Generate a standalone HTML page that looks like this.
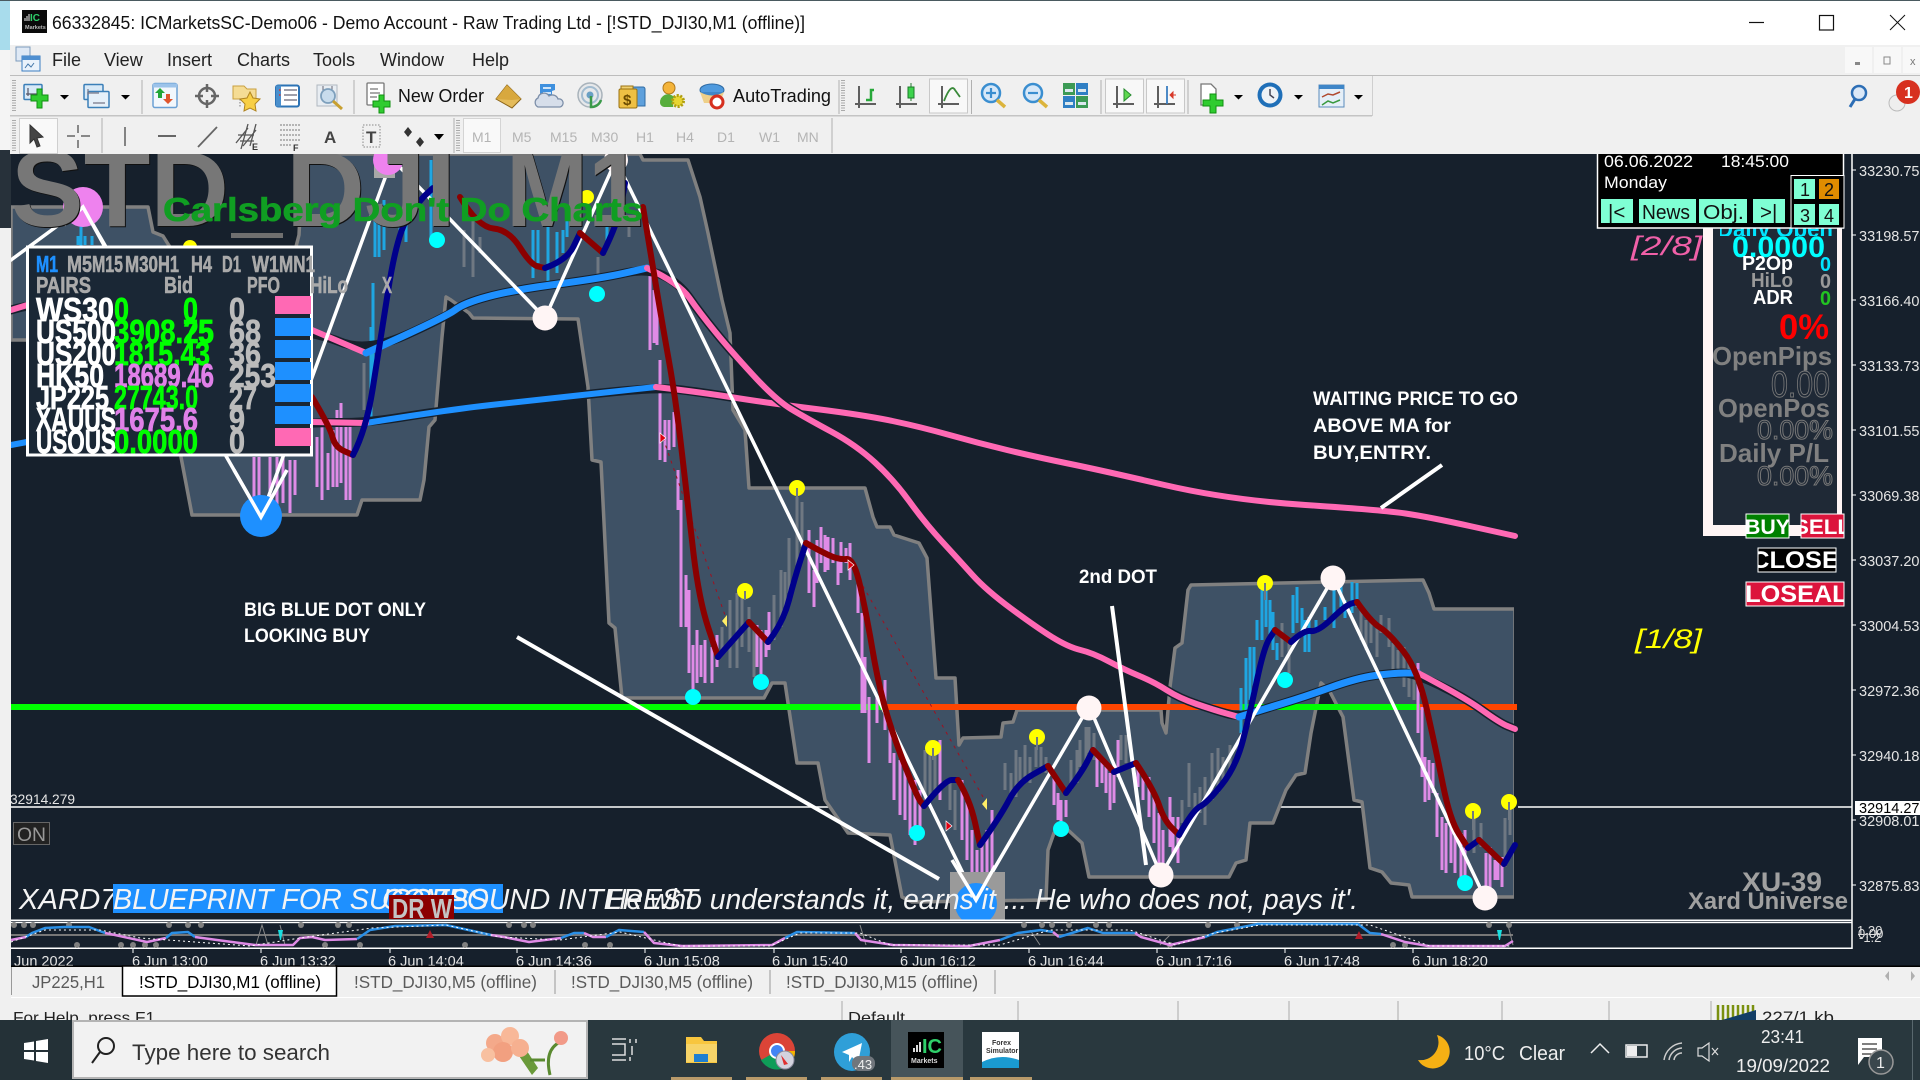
<!DOCTYPE html>
<html lang="en"><head><meta charset="utf-8"><title>MT4</title>
<style>
html,body{margin:0;padding:0;background:#16202c;width:1920px;height:1080px;overflow:hidden}
svg{display:block}
text{font-family:"Liberation Sans",sans-serif;white-space:pre}
.b{font-weight:bold}
.i{font-style:italic}
.ma{fill:none;stroke-linejoin:round;stroke-linecap:round}
.ax{font-size:14.5px;fill:#e4e4e4}
.mn{font-size:18px;fill:#222}
.tf{font-size:14px;fill:#b4b4b4}
.gp{font-weight:bold;font-size:23px;fill:#aaa;stroke:#aaa;stroke-width:.6}
.rw{font-weight:bold;font-size:33px;fill:#fff;stroke:#fff;stroke-width:.7}
.gr{font-weight:bold;font-size:33px;fill:#00ff00;stroke:#00ff00;stroke-width:.7}
.pk{font-weight:bold;font-size:33px;fill:#e080e8;stroke:#e080e8;stroke-width:.7}
.gy{font-weight:bold;font-size:33px;fill:#bbb;stroke:#bbb;stroke-width:.7}
.an{font-weight:bold;font-size:19px;fill:#fff}
.dg{font-size:30px;fill:none;stroke:#777;stroke-width:1}
.og{font-weight:bold;font-size:26px;fill:#808080}
.ti{font-size:14.5px;fill:#e4e4e4}
.tb{font-size:17.5px;fill:#5a5a5a}
.st{font-weight:bold;font-size:108px}
</style></head><body>
<svg xmlns="http://www.w3.org/2000/svg" width="1920" height="1080" viewBox="0 0 1920 1080">
<defs><clipPath id="c1"><rect x="940" y="860" width="80" height="60"/></clipPath>
<clipPath id="c2"><rect x="1720" y="150" width="120" height="86"/></clipPath></defs>
<!-- chart background -->
<rect width="1920" height="1080" fill="#16202c"/>
<line x1="11" y1="807" x2="1852" y2="807" stroke="#fff" stroke-width="1.5"/>
<!-- bands -->
<polygon points="11,207 148,207 153,232 163,236 168,244 185,270 290,270 299,235 303,154 640,154 643,160 688,160 700,197 708,233 722,300 730,333 733,410 745,430 749,488 865,488 873,517 877,527 890,527 894,535 919,543 927,558 936,678 955,678 959,745 963,738 1001,737 1003,723 1013,722 1017,710 1161,710 1162,723 1166,733 1170,687 1175,648 1182,643 1188,590 1191,585 1423,580 1429,593 1434,609 1515,609 1515,897 1412,897 1409,885 1391,883 1382,872 1370,868 1362,802 1354,800 1343,717 1329,690 1321,683 1311,733 1305,773 1296,775 1286,790 1273,823 1250,823 1246,860 1236,863 1229,877 1089,877 1082,843 1068,830 1054,833 1048,850 1046,900 912,902 902,897 890,835 848,833 825,800 818,763 797,763 785,683 772,683 764,698 622,698 615,628 609,623 601,462 592,460 588,387 578,319 473,318 469,313 451,300 446,297 442,337 435,420 429,427 424,480 420,500 362,500 357,515 192,515 181,457 178,400 27,340 11,340" fill="#3e5165" stroke="#808080" stroke-width="3.5" stroke-linejoin="round"/>
<rect x="1514" y="600" width="4" height="300" fill="#16202c"/>
<!-- horizontal level -->
<rect x="11" y="704" width="875" height="6" fill="#00ff00"/>
<rect x="886" y="704" width="356" height="6" fill="#ff4500"/>
<rect x="1242" y="704" width="178" height="6" fill="#00ff00"/>
<rect x="1420" y="704" width="97" height="6" fill="#ff4500"/>
<!-- gray candles -->
<path fill="none" stroke="#6f7882" stroke-width="3" d="M722 627V653M730 600V668M737 593V668M742 593V647M749 607V652M754 627V677M774 595V640M781 570V627M785 572V617M789 538V593M797 497V567M802 502V547M925 750V800M930 740V800M935 755V790M950 780V810M955 790V830M1005 763V790M1011 773V800M1016 750V797M1020 757V787M1025 745V783M1030 757V783M1036 747V767M1041 747V767M1046 757V773M1071 760V790M1077 750V783M1080 740V767M1086 727V767M1089 727V753M1094 733V760M1121 735V760M1126 735V763M1182 800V823M1189 763V807M1195 793V817M1200 787V813M1205 777V825M1212 753V800M1218 748V793M1223 757V783M1230 745V773M1238 740V757M1282 623V657M1289 643V673M1361 610V640M1366 620V650M1371 617V643M1377 625V657M1381 615V633M1389 618V647M1393 643V677M1398 650V677M1404 647V687M1409 663V697M1414 667V700M1474 813V853M1481 823V847M1505 818V867M1510 808V835M364 363V410M464 230V267M473 217V277M480 237V253M598 257V277M629 227V237M415 160V210M445 170V220"/>
<!-- pink candles -->
<path fill="none" stroke="#df8be6" stroke-width="3" d="M657 300V345M650 267V350M654 290V343M660 360V460M665 420V462M669 420V450M674 412V447M678 470V510M681 500V627M686 575V627M689 590V673M693 645V690M697 630V683M701 645V677M705 640V683M712 647V683M717 635V667M757 625V667M761 630V677M766 630V657M769 612V650M809 530V593M814 570V607M817 540V583M821 527V563M825 535V572M828 537V570M833 538V563M838 557V585M841 542V573M846 548V563M850 543V580M858 577V613M862 613V713M865 657V713M869 697V763M877 697V723M885 680V730M890 730V763M894 753V800M900 760V815M905 770V820M910 775V835M915 780V845M920 790V830M940 740V800M962 780V840M967 800V860M972 830V895M977 850V905M982 840V900M987 830V890M992 810V870M1054 777V805M1058 793V820M1061 800V830M1066 800V817M1097 757V787M1102 760V783M1106 763V793M1110 773V810M1114 773V803M1118 740V777M1138 767V787M1143 777V800M1149 777V817M1154 797V843M1159 813V867M1163 830V870M1170 797V847M1173 817V853M1178 817V863M1418 663V733M1422 707V777M1425 757V802M1429 760V800M1433 763V793M1437 793V837M1442 817V870M1446 823V873M1451 827V863M1455 830V873M1461 833V877M1465 830V880M1486 853V897M1490 847V897M1495 860V880M1498 857V880M1502 857V887M254 457V503M259 457V498M270 457V503M277 457V513M283 457V503M290 460V513M295 460V495M317 437V487M322 427V500M328 453V490M333 430V487M337 410V487M341 403V483M346 427V500M350 420V500"/>
<!-- cyan candles -->
<path fill="none" stroke="#1fa6e2" stroke-width="3" d="M1241 688V733M1246 658V717M1250 647V700M1254 647V687M1257 620V640M1262 590V640M1266 585V627M1270 600V637M1273 612V650M1277 643V660M1293 595V633M1297 587V623M1302 608V633M1305 620V652M1309 617V652M1316 620V633M1325 607V620M1334 590V628M1341 583V607M1345 600V618M1352 582V613M1357 583V607M81 207V247M78 236V245M85 236V245M92 236V245M371 327V423M373 283V383M375 200V257M379 207V257M384 200V250M400 223V237M406 225V242M431 160V237M533 230V278M538 230V263M548 227V283M557 232V273M563 230V253M567 217V237M607 227V243M618 180V200"/>
<!-- thin red dashes -->
<path fill="none" stroke="#a01020" stroke-width="1" stroke-dasharray="3 5" d="M663 438L727 621M851 565L987 804"/>
<!-- slow MA -->
<polyline class="ma s" stroke="#16202c" stroke-width="9" points="11,445 27,442 312,422 366,423 446,410 536,400 656,387 699,392 768,403 864,415 921,427 978,443 1036,457 1100,470 1229,500 1382,510 1429,517 1515,536"/>
<polyline class="ma" stroke="#1e90ff" stroke-width="6" points="11,445 27,442"/>
<polyline class="ma s" stroke="#1e90ff" stroke-width="6" points="366,423 446,410 536,400 656,387"/>
<polyline class="ma" stroke="#ff69b4" stroke-width="6" points="312,422 366,423"/>
<polyline class="ma s" stroke="#ff69b4" stroke-width="6" points="656,387 699,392 768,403 864,415 921,427 978,443 1036,457 1100,470 1229,500 1382,510 1429,517 1515,536"/>
<!-- second MA -->
<polyline class="ma s" stroke="#16202c" stroke-width="9" points="11,310 60,295 312,330 366,353 446,317 464,303 513,290 603,278 647,268 679,283 700,313 730,350 776,400 806,418 856,445 894,480 925,523 959,560 986,590 1036,627 1068,647 1093,653 1125,670 1154,682 1179,698 1214,710 1239,717 1261,710 1304,697 1357,678 1393,673 1414,673 1464,697 1500,723 1515,729"/>
<polyline class="ma" stroke="#ff69b4" stroke-width="6" points="11,310 60,295 312,330 366,353"/>
<polyline class="ma s" stroke="#1e90ff" stroke-width="7" points="366,353 446,317 464,303 513,290 603,278 647,268"/>
<polyline class="ma s" stroke="#ff69b4" stroke-width="6" points="647,268 679,283 700,313 730,350 776,400 806,418 856,445 894,480 925,523 959,560 986,590 1036,627 1068,647 1093,653 1125,670 1154,682 1179,698 1214,710 1239,717"/>
<polyline class="ma s" stroke="#1e90ff" stroke-width="7" points="1239,717 1261,710 1304,697 1357,678 1393,673 1418,673"/>
<polyline class="ma s" stroke="#ff69b4" stroke-width="6" points="1418,673 1464,697 1500,723 1515,729"/>
<!-- zigzag -->
<polyline class="ma" stroke="#fff" stroke-width="3.5" points="11,260 83,207 261,517 392,159 545,318 616,160 976,900 1089,706 1161,875 1333,578 1485,898"/>
<!-- drawn lines -->
<path fill="none" stroke="#fff" stroke-width="4" d="M517 637L939 879M1112 606L1146 865M1442 465L1381 508"/>
<!-- HMA -->
<g stroke-width="6">
<polyline class="ma s" stroke="#8b0000" points="312,397 330,427 335,447 353,455"/>
<polyline class="ma s" stroke="#00008b" points="353,455 366,430 379,350 397,233 420,200 433,188"/>
<polyline class="ma s" stroke="#8b0000" points="460,197 478,227 509,230 531,265 545,268"/>
<polyline class="ma s" stroke="#00008b" points="545,268 567,260 580,233"/>
<polyline class="ma" stroke="#8b0000" points="580,233 603,253"/>
<polyline class="ma s" stroke="#00008b" points="603,253 618,223 625,183"/>
<polyline class="ma s" stroke="#8b0000" points="643,207 661,317 676,400 688,507 699,600 718,657"/>
<polyline class="ma s" stroke="#00008b" points="718,657 733,640 749,622"/>
<polyline class="ma" stroke="#8b0000" points="749,622 768,642"/>
<polyline class="ma s" stroke="#00008b" points="768,642 783,623 795,577 806,543"/>
<polyline class="ma s" stroke="#8b0000" points="806,543 818,550 839,560 854,558 867,617 877,677 890,727 917,797 924,806"/>
<polyline class="ma s" stroke="#00008b" points="924,806 945,780 958,780"/>
<polyline class="ma s" stroke="#8b0000" points="958,780 970,800 980,845"/>
<polyline class="ma s" stroke="#00008b" points="980,845 1000,817 1018,783 1048,766"/>
<polyline class="ma" stroke="#8b0000" points="1048,766 1066,793"/>
<polyline class="ma s" stroke="#00008b" points="1066,793 1082,772 1093,750"/>
<polyline class="ma" stroke="#8b0000" points="1093,750 1114,772"/>
<polyline class="ma" stroke="#00008b" points="1114,772 1136,763"/>
<polyline class="ma s" stroke="#8b0000" points="1136,763 1154,790 1164,820 1179,835"/>
<polyline class="ma s" stroke="#00008b" points="1179,835 1193,810 1207,803 1236,767 1250,713 1264,647 1275,630"/>
<polyline class="ma" stroke="#8b0000" points="1275,630 1291,642"/>
<polyline class="ma s" stroke="#00008b" points="1291,642 1304,630 1318,632 1346,605 1357,602"/>
<polyline class="ma s" stroke="#8b0000" points="1357,602 1371,622 1389,633 1418,670 1436,750 1450,820 1468,848"/>
<polyline class="ma" stroke="#00008b" points="1468,848 1479,840"/>
<polyline class="ma" stroke="#8b0000" points="1479,840 1504,864"/>
<polyline class="ma" stroke="#00008b" points="1504,864 1515,845"/>
</g>
<!-- dots -->
<rect x="374" y="155" width="21" height="23" fill="#a8a8a8"/>
<circle cx="388" cy="160" r="15" fill="#ee82ee"/>
<circle cx="83" cy="207" r="20" fill="#ee82ee"/>
<path d="M64 225L83 207L105 247" fill="none" stroke="#fff" stroke-width="3.5"/>
<circle cx="261" cy="516" r="21" fill="#1e90ff"/>
<path d="M234 470L261 517L287 470" fill="none" stroke="#fff" stroke-width="3.5"/>
<rect x="950" y="872" width="55" height="48" fill="#9a9a9a"/>
<circle cx="976" cy="904" r="21" fill="#1e90ff" clip-path="url(#c1)"/>
<path d="M952 860L976 900L995 866" fill="none" stroke="#fff" stroke-width="3.5"/>
<g fill="#fff5f5"><circle cx="545" cy="318" r="12.5"/><circle cx="616" cy="160" r="12"/><circle cx="1089" cy="708" r="12.5"/><circle cx="1161" cy="875" r="12.5"/><circle cx="1333" cy="578" r="12.5"/><circle cx="1485" cy="898" r="12.5"/></g>
<g fill="#00ffff"><circle cx="437" cy="240" r="8"/><circle cx="597" cy="294" r="8"/><circle cx="693" cy="697" r="8"/><circle cx="761" cy="682" r="8"/><circle cx="917" cy="833" r="8"/><circle cx="1061" cy="829" r="8"/><circle cx="1285" cy="680" r="8"/><circle cx="1465" cy="883" r="8"/></g>
<g fill="#ffff00"><circle cx="190" cy="247" r="7"/><circle cx="587" cy="197" r="7"/><circle cx="797" cy="488" r="8"/><circle cx="745" cy="591" r="8"/><circle cx="933" cy="748" r="8"/><circle cx="1037" cy="737" r="8"/><circle cx="1265" cy="583" r="8"/><circle cx="1473" cy="811" r="8"/><circle cx="1509" cy="802" r="8"/></g>
<path d="M797 488V505M745 591V600M933 748V760M1037 737V750M1473 811V830M1509 802V820M1265 583V600" stroke="#6f7882" stroke-width="2"/>
<path d="M727 615L722 621L727 627ZM987 798L982 804L987 810Z" fill="#ffee66"/>
<g fill="#e00010" stroke="#fff" stroke-width=".7"><path d="M660 433L666 438L660 443ZM848 560L854 565L848 570ZM946 821L952 826L946 831Z"/></g>
<!-- STD watermark -->
<g fill="#111">
<text x="12" y="227" class="st" textLength="218" lengthAdjust="spacingAndGlyphs">STD</text>
<text x="287" y="227" class="st" textLength="170" lengthAdjust="spacingAndGlyphs">DJI</text>
<text x="507" y="227" class="st" textLength="137" lengthAdjust="spacingAndGlyphs">M1</text>
</g>
<g fill="#777">
<text x="11" y="226" class="st" textLength="218" lengthAdjust="spacingAndGlyphs">STD</text>
<text x="286" y="226" class="st" textLength="170" lengthAdjust="spacingAndGlyphs">DJI</text>
<text x="506" y="226" class="st" textLength="137" lengthAdjust="spacingAndGlyphs">M1</text>
</g>
<rect x="231" y="233" width="52" height="5" fill="#6f6f6f"/>
<text x="163" y="221" class="b" font-size="33" fill="#109e22" stroke="#109e22" stroke-width=".6" textLength="480" lengthAdjust="spacingAndGlyphs">Carlsberg Don't Do Charts</text>
<!-- left panel -->
<rect x="27.5" y="247" width="284" height="208" fill="#1a2735" stroke="#fff" stroke-width="3"/>
<text x="36" y="272" class="gp" style="fill:#1e90ff;stroke:#1e90ff" textLength="22" lengthAdjust="spacingAndGlyphs">M1</text>
<text x="67" y="272" class="gp" textLength="25" lengthAdjust="spacingAndGlyphs">M5</text>
<text x="92" y="272" class="gp" textLength="31" lengthAdjust="spacingAndGlyphs">M15</text>
<text x="125" y="272" class="gp" textLength="33" lengthAdjust="spacingAndGlyphs">M30</text>
<text x="158" y="272" class="gp" textLength="21" lengthAdjust="spacingAndGlyphs">H1</text>
<text x="191" y="272" class="gp" textLength="21" lengthAdjust="spacingAndGlyphs">H4</text>
<text x="222" y="272" class="gp" textLength="19" lengthAdjust="spacingAndGlyphs">D1</text>
<text x="252" y="272" class="gp" textLength="27" lengthAdjust="spacingAndGlyphs">W1</text>
<text x="279" y="272" class="gp" textLength="36" lengthAdjust="spacingAndGlyphs">MN1</text>
<text x="36" y="293" class="gp" textLength="55" lengthAdjust="spacingAndGlyphs">PAIRS</text>
<text x="164" y="293" class="gp" textLength="29" lengthAdjust="spacingAndGlyphs">Bid</text>
<text x="247" y="293" class="gp" textLength="33" lengthAdjust="spacingAndGlyphs">PFO</text>
<text x="310" y="293" class="gp" textLength="38" lengthAdjust="spacingAndGlyphs">HiLo</text>
<text x="382" y="293" class="gp" textLength="10" lengthAdjust="spacingAndGlyphs">X</text>
<g>
<text x="36" y="321" class="rw" textLength="78" lengthAdjust="spacingAndGlyphs">WS30</text>
<text x="36" y="343" class="rw" textLength="80" lengthAdjust="spacingAndGlyphs">US500</text>
<text x="36" y="365" class="rw" textLength="80" lengthAdjust="spacingAndGlyphs">US200</text>
<text x="36" y="387" class="rw" textLength="68" lengthAdjust="spacingAndGlyphs">HK50</text>
<text x="36" y="409" class="rw" textLength="73" lengthAdjust="spacingAndGlyphs">JP225</text>
<text x="36" y="431" class="rw" textLength="80" lengthAdjust="spacingAndGlyphs">XAUUS</text>
<text x="36" y="453" class="rw" textLength="80" lengthAdjust="spacingAndGlyphs">USOUS</text>
<text x="114" y="321" class="gr" textLength="15" lengthAdjust="spacingAndGlyphs">0</text>
<text x="183" y="321" class="gr" textLength="15" lengthAdjust="spacingAndGlyphs">0</text>
<text x="114" y="343" class="gr" textLength="100" lengthAdjust="spacingAndGlyphs">3908.25</text>
<text x="183" y="343" class="gr" textLength="30" lengthAdjust="spacingAndGlyphs">75</text>
<text x="114" y="365" class="gr" textLength="96" lengthAdjust="spacingAndGlyphs">1815.43</text>
<text x="114" y="387" class="pk" textLength="100" lengthAdjust="spacingAndGlyphs">18689.46</text>
<text x="114" y="409" class="gr" textLength="84" lengthAdjust="spacingAndGlyphs">27743.0</text>
<text x="114" y="431" class="pk" textLength="84" lengthAdjust="spacingAndGlyphs">1675.6</text>
<text x="114" y="453" class="gr" textLength="84" lengthAdjust="spacingAndGlyphs">0.0000</text>
<text x="229" y="321" class="gy" textLength="16" lengthAdjust="spacingAndGlyphs">0</text>
<text x="229" y="343" class="gy" textLength="32" lengthAdjust="spacingAndGlyphs">68</text>
<text x="229" y="365" class="gy" textLength="32" lengthAdjust="spacingAndGlyphs">36</text>
<text x="229" y="387" class="gy" textLength="47" lengthAdjust="spacingAndGlyphs">253</text>
<text x="229" y="409" class="gy" textLength="28" lengthAdjust="spacingAndGlyphs">27</text>
<text x="229" y="431" class="gy" textLength="16" lengthAdjust="spacingAndGlyphs">9</text>
<text x="229" y="453" class="gy" textLength="16" lengthAdjust="spacingAndGlyphs">0</text>
</g>
<g fill="#1e90ff"><rect x="275" y="318" width="36" height="18"/><rect x="275" y="340" width="36" height="18"/><rect x="275" y="362" width="36" height="18"/><rect x="275" y="384" width="36" height="18"/><rect x="275" y="406" width="36" height="18"/></g>
<rect x="275" y="296" width="36" height="18" fill="#ff69b4"/><rect x="275" y="428" width="36" height="18" fill="#ff69b4"/>
<!-- annotations -->
<text x="244" y="616" class="an" textLength="182" lengthAdjust="spacingAndGlyphs">BIG BLUE DOT ONLY</text>
<text x="244" y="642" class="an" textLength="126" lengthAdjust="spacingAndGlyphs">LOOKING BUY</text>
<text x="1313" y="405" class="an" textLength="205" lengthAdjust="spacingAndGlyphs">WAITING PRICE TO GO</text>
<text x="1313" y="432" class="an" textLength="138" lengthAdjust="spacingAndGlyphs">ABOVE MA for</text>
<text x="1313" y="459" class="an" textLength="118" lengthAdjust="spacingAndGlyphs">BUY,ENTRY.</text>
<text x="1079" y="583" class="an" textLength="78" lengthAdjust="spacingAndGlyphs">2nd DOT</text>
<text x="1631" y="255" class="i" font-size="27" fill="#f060a8" textLength="71" lengthAdjust="spacingAndGlyphs">[2/8]</text>
<text x="1635" y="648" class="i" font-size="27" fill="#ffff00" textLength="67" lengthAdjust="spacingAndGlyphs">[1/8]</text>
<!-- on + price -->
<text x="10" y="804" font-size="14" fill="#e4e4e4" textLength="65" lengthAdjust="spacingAndGlyphs">32914.279</text>
<rect x="13.5" y="822.5" width="36" height="22" fill="#222" stroke="#666"/>
<text x="17" y="841" font-size="19" fill="#999" textLength="29" lengthAdjust="spacingAndGlyphs">ON</text>
<!-- ticker -->
<text x="19" y="909" class="i" font-size="29" fill="#f4f4f4" textLength="130" lengthAdjust="spacingAndGlyphs">XARD777</text>
<rect x="113" y="884" width="390" height="29" fill="#1e90ff"/>
<text x="113" y="909" class="i" font-size="29" fill="#f4f4f4" textLength="375" lengthAdjust="spacingAndGlyphs">BLUEPRINT FOR SUCCESS</text>
<text x="382" y="909" class="i" font-size="29" fill="#f4f4f4" textLength="316" lengthAdjust="spacingAndGlyphs">COMPOUND INTEREST</text>
<text x="606" y="909" class="i" font-size="29" fill="#f4f4f4" textLength="752" lengthAdjust="spacingAndGlyphs">He who understands it, earns it ... He who does not, pays it'.</text>
<rect x="389" y="895" width="65" height="24" fill="#8b0000"/>
<text x="392" y="918" class="b" font-size="28" fill="#c4c4c4" textLength="60" lengthAdjust="spacingAndGlyphs">DR W</text>
<text x="1742" y="891" class="b" font-size="27" fill="#a0a0a0" textLength="80" lengthAdjust="spacingAndGlyphs">XU-39</text>
<text x="1688" y="909" class="b" font-size="24" fill="#a0a0a0" textLength="160" lengthAdjust="spacingAndGlyphs">Xard Universe</text>
<!-- right stat panel -->
<rect x="1703" y="154" width="139" height="382" fill="#fff5f5"/>
<rect x="1713" y="154" width="124" height="371" fill="#1f2936"/>
<text x="1717" y="237" class="b" font-size="23" fill="#00e5ff" textLength="116" lengthAdjust="spacingAndGlyphs" clip-path="url(#c2)">Daily Open</text>
<text x="1732" y="257" class="b" font-size="30" fill="#00ffff" textLength="93" lengthAdjust="spacingAndGlyphs">0.0000</text>
<text x="1742" y="270" class="b" font-size="20" fill="#fff" textLength="51" lengthAdjust="spacingAndGlyphs">P2Op</text>
<text x="1820" y="271" class="b" font-size="20" fill="#00e5ff" textLength="11" lengthAdjust="spacingAndGlyphs">0</text>
<text x="1751" y="287" class="b" font-size="20" fill="#999" textLength="42" lengthAdjust="spacingAndGlyphs">HiLo</text>
<text x="1820" y="288" class="b" font-size="20" fill="#999" textLength="11" lengthAdjust="spacingAndGlyphs">0</text>
<text x="1753" y="304" class="b" font-size="20" fill="#fff" textLength="40" lengthAdjust="spacingAndGlyphs">ADR</text>
<text x="1820" y="305" class="b" font-size="20" fill="#22c322" textLength="11" lengthAdjust="spacingAndGlyphs">0</text>
<text x="1779" y="339" class="b" font-size="35" fill="#ff0000" textLength="50" lengthAdjust="spacingAndGlyphs">0%</text>
<text x="1712" y="365" class="og" textLength="120" lengthAdjust="spacingAndGlyphs">OpenPips</text>
<text x="1771" y="397" class="dg" style="font-size:37px" textLength="59" lengthAdjust="spacingAndGlyphs">0.00</text>
<text x="1718" y="417" class="og" textLength="112" lengthAdjust="spacingAndGlyphs">OpenPos</text>
<text x="1757" y="439" class="dg" style="font-size:27px" textLength="76" lengthAdjust="spacingAndGlyphs">0.00%</text>
<text x="1719" y="462" class="og" textLength="110" lengthAdjust="spacingAndGlyphs">Daily P/L</text>
<text x="1757" y="485" class="dg" style="font-size:27px" textLength="76" lengthAdjust="spacingAndGlyphs">0.00%</text>
<!-- black info box -->
<rect x="1597.5" y="150" width="246" height="78" fill="#000" stroke="#fff" stroke-width="1.5"/>
<text x="1604" y="167" font-size="17" fill="#fff" textLength="89" lengthAdjust="spacingAndGlyphs">06.06.2022</text>
<text x="1721" y="167" font-size="17" fill="#fff" textLength="68" lengthAdjust="spacingAndGlyphs">18:45:00</text>
<text x="1604" y="188" font-size="17" fill="#fff" textLength="63" lengthAdjust="spacingAndGlyphs">Monday</text>
<g fill="#7fffd4"><rect x="1601" y="199" width="32" height="24"/><rect x="1639" y="199" width="57" height="24"/><rect x="1699" y="199" width="48" height="24"/><rect x="1753" y="199" width="32" height="24"/></g>
<g font-size="20.5" fill="#111"><text x="1608" y="219">|&lt;</text><text x="1642" y="219" textLength="48" lengthAdjust="spacingAndGlyphs">News</text><text x="1703" y="219" textLength="41" lengthAdjust="spacingAndGlyphs">Obj.</text><text x="1760" y="219">&gt;|</text></g>
<rect x="1791" y="175.500" width="53" height="52.500" fill="#000" stroke="#fff" stroke-width="1"/>
<rect x="1794" y="179" width="21" height="20" fill="#7fffd4"/><rect x="1819" y="179" width="20" height="20" fill="#e08c00"/><rect x="1794" y="204" width="21" height="21" fill="#7fffd4"/><rect x="1819" y="204" width="20" height="21" fill="#7fffd4"/>
<g font-size="18" fill="#111"><text x="1800" y="196">1</text><text x="1824" y="196">2</text><text x="1800" y="222">3</text><text x="1824" y="222">4</text></g>
<!-- trade buttons -->
<rect x="1746" y="514" width="43" height="24" fill="#008000" stroke="#fff"/>
<rect x="1801" y="514" width="43" height="24" fill="#dc143c" stroke="#fff"/>
<rect x="1758" y="548" width="78" height="24" fill="#000" stroke="#fff"/>
<rect x="1746" y="582" width="98" height="24" fill="#dc143c" stroke="#fff"/>
<svg x="1746" y="514" width="43" height="24"><text x="-1" y="20" class="b" font-size="21" fill="#fff" textLength="45" lengthAdjust="spacingAndGlyphs">BUY</text></svg>
<svg x="1801" y="514" width="43" height="24"><text x="-7" y="20" class="b" font-size="21" fill="#fff" textLength="57" lengthAdjust="spacingAndGlyphs">SELL</text></svg>
<svg x="1758" y="548" width="78" height="24"><text x="-7" y="20" class="b" font-size="24" fill="#fff" textLength="88" lengthAdjust="spacingAndGlyphs">CLOSE</text></svg>
<svg x="1746" y="582" width="98" height="24"><text x="-19" y="20" class="b" font-size="24" fill="#fff" textLength="136" lengthAdjust="spacingAndGlyphs">CLOSEALL</text></svg>
<!-- separators, subwindow -->
<rect x="11" y="920" width="1841" height="46" fill="#16202c"/>
<rect x="11" y="919.500" width="1841" height="1.500" fill="#fff"/>
<rect x="11" y="921.700" width="1841" height="1.500" fill="#fff"/>
<rect x="11" y="947.500" width="1841" height="1.500" fill="#fff"/>
<line x1="11" y1="935" x2="1513" y2="935" stroke="#777" stroke-width="2"/>
<path d="M256 945L262 925L268 945M280 925L285 945M860 925L866 945M1030 930L1040 945M1160 945L1170 935M1508 925L1513 945" fill="none" stroke="#888" stroke-width="1"/>
<g fill="#808080">
<circle cx="14" cy="925" r="3"/><circle cx="24" cy="925" r="3"/><circle cx="33" cy="925" r="3"/><circle cx="69" cy="925" r="3"/><circle cx="169" cy="925" r="3"/><circle cx="188" cy="925" r="3"/><circle cx="201" cy="925" r="3"/><circle cx="301" cy="925" r="3"/><circle cx="338" cy="925" r="3"/><circle cx="349" cy="925" r="3"/><circle cx="509" cy="925" r="3"/><circle cx="524" cy="925" r="3"/><circle cx="533" cy="925" r="3"/><circle cx="1024" cy="925" r="3"/><circle cx="1042" cy="925" r="3"/><circle cx="1052" cy="925" r="3"/><circle cx="1069" cy="925" r="3"/><circle cx="1096" cy="925" r="3"/><circle cx="1109" cy="925" r="3"/><circle cx="1208" cy="925" r="3"/><circle cx="1237" cy="925" r="3"/><circle cx="1489" cy="925" r="3"/><circle cx="1509" cy="925" r="3"/>
<circle cx="77" cy="945" r="3"/><circle cx="121" cy="945" r="3"/><circle cx="133" cy="945" r="3"/><circle cx="145" cy="945" r="3"/><circle cx="156" cy="945" r="3"/><circle cx="325" cy="945" r="3"/><circle cx="360" cy="945" r="3"/><circle cx="465" cy="945" r="3"/><circle cx="585" cy="945" r="3"/><circle cx="610" cy="945" r="3"/><circle cx="1170" cy="945" r="3"/><circle cx="1393" cy="945" r="3"/><circle cx="1405" cy="945" r="3"/>
</g>
<g fill="none" stroke-width="2.5" stroke-linejoin="round">
<polyline stroke="#df8be6" points="11,940 26,937"/><polyline stroke="#2a8fe6" points="26,937 32,933 45,928 64,927 89,927 105,933"/><polyline stroke="#df8be6" points="105,933 115,935 147,942 166,938"/><polyline stroke="#2a8fe6" points="166,938 172,933 188,932 195,937"/><polyline stroke="#df8be6" points="195,937 217,940 255,945 293,945 300,938 312,937 325,940 357,939"/><polyline stroke="#2a8fe6" points="357,939 370,930 395,926 446,925 491,935"/><polyline stroke="#df8be6" points="491,935 504,937 529,942 561,938"/><polyline stroke="#2a8fe6" points="561,938 574,933 584,933"/><polyline stroke="#df8be6" points="584,933 593,937 606,937"/><polyline stroke="#2a8fe6" points="606,937 619,930 644,932"/><polyline stroke="#df8be6" points="644,932 654,943 682,946 772,945 785,938"/><polyline stroke="#2a8fe6" points="785,938 797,932 855,933"/><polyline stroke="#df8be6" points="855,933 861,940 893,945 969,946 1000,940"/><polyline stroke="#2a8fe6" points="1000,940 1018,933 1041,930 1053,932"/><polyline stroke="#df8be6" points="1053,932 1059,937"/><polyline stroke="#2a8fe6" points="1059,937 1088,928 1103,933 1135,933"/><polyline stroke="#df8be6" points="1135,933 1141,937 1170,945 1205,937"/><polyline stroke="#2a8fe6" points="1205,937 1217,932 1258,924 1358,924 1370,933 1381,934"/><polyline stroke="#df8be6" points="1381,934 1405,942 1428,946 1505,946 1513,941"/>
</g>
<path d="M11 942L45 930H100L140 938L250 946L300 938L372 928L446 925L500 937L560 940L620 932L680 946H770L800 933H860L890 945H1000L1050 930H1130L1175 945L1215 933L1260 925H1370L1430 946H1510" fill="none" stroke="#fff" stroke-width="1" stroke-dasharray="2 3"/>
<path d="M430 930l-4 8h8Z M1359 931l-4 8h8Z" fill="#b01c28"/><path d="M278 930h5l-2 10h-1ZM1497 930h5l-2 10h-1Z" fill="#19dfe0"/>
<!-- right axis -->
<rect x="1852" y="154" width="68" height="812" fill="#16202c"/>
<line x1="1852" y1="154" x2="1852" y2="949" stroke="#fff" stroke-width="1.5"/>
<path d="M1852 170h4M1852 235h4M1852 300h4M1852 365h4M1852 430h4M1852 495h4M1852 560h4M1852 625h4M1852 690h4M1852 755h4M1852 820h4M1852 885h4" stroke="#fff"/>
<g class="ax"><text x="1859" y="176">33230.75</text><text x="1859" y="241">33198.57</text><text x="1859" y="306">33166.40</text><text x="1859" y="371">33133.73</text><text x="1859" y="436">33101.55</text><text x="1859" y="501">33069.38</text><text x="1859" y="566">33037.20</text><text x="1859" y="631">33004.53</text><text x="1859" y="696">32972.36</text><text x="1859" y="761">32940.18</text><text x="1859" y="826">32908.01</text><text x="1859" y="891">32875.83</text></g>
<rect x="1855" y="801" width="65" height="14" fill="#fff"/>
<text x="1859" y="813" font-size="14.5" fill="#000">32914.27</text>
<g font-size="13" fill="#ddd"><text x="1857" y="935">1.20</text><text x="1858" y="938">0.00</text><text x="1859" y="942">-1.2</text></g>
<!-- time axis -->
<rect x="11" y="949" width="1909" height="17" fill="#16202c"/>
<path d="M133 949v4M261 949v4M390 949v4M517 949v4M645 949v4M774 949v4M901 949v4M1029 949v4M1157 949v4M1285 949v4M1413 949v4" stroke="#fff"/>
<g class="ti"><text x="14" y="966">Jun 2022</text><text x="132" y="966">6 Jun 13:00</text><text x="260" y="966">6 Jun 13:32</text><text x="388" y="966">6 Jun 14:04</text><text x="516" y="966">6 Jun 14:36</text><text x="644" y="966">6 Jun 15:08</text><text x="772" y="966">6 Jun 15:40</text><text x="900" y="966">6 Jun 16:12</text><text x="1028" y="966">6 Jun 16:44</text><text x="1156" y="966">6 Jun 17:16</text><text x="1284" y="966">6 Jun 17:48</text><text x="1412" y="966">6 Jun 18:20</text></g>
<rect x="0" y="965.500" width="1920" height="1.500" fill="#000"/>
<!-- tab bar -->
<rect x="0" y="967" width="1920" height="30" fill="#f0f0f0"/>
<text x="32" y="988" class="tb" textLength="73" lengthAdjust="spacingAndGlyphs">JP225,H1</text>
<rect x="122.500" y="966" width="214" height="30" fill="#fff" stroke="#000" stroke-width="1.500"/>
<text x="139" y="988" class="tb" style="fill:#000" textLength="182" lengthAdjust="spacingAndGlyphs">!STD_DJI30,M1 (offline)</text>
<text x="354" y="988" class="tb" textLength="183" lengthAdjust="spacingAndGlyphs">!STD_DJI30,M5 (offline)</text>
<text x="571" y="988" class="tb" textLength="182" lengthAdjust="spacingAndGlyphs">!STD_DJI30,M5 (offline)</text>
<text x="786" y="988" class="tb" textLength="192" lengthAdjust="spacingAndGlyphs">!STD_DJI30,M15 (offline)</text>
<path d="M11.500 967v28M555 970v24M770 970v24M995 970v24" stroke="#999"/>
<path d="M1889 971l-4 5 4 5ZM1911 971l4 5-4 5Z" fill="#b0b0b0"/>
<!-- status -->
<rect x="0" y="997" width="1920" height="23" fill="#f0f0f0"/>
<rect x="0" y="997" width="1920" height="1" fill="#fff"/>
<text x="13" y="1023" font-size="16" fill="#222" textLength="142" lengthAdjust="spacingAndGlyphs">For Help, press F1</text>
<text x="848" y="1023" font-size="16" fill="#222" textLength="57" lengthAdjust="spacingAndGlyphs">Default</text>
<path d="M842 1001v19M1018 1001v19M1178 1001v19M1289 1001v19M1398 1001v19M1502 1001v19M1609 1001v19M1711 1001v19" stroke="#aaa"/>
<path fill="none" stroke="#7a9010" stroke-width="2.500" d="M1718 1005v15M1723 1005v15M1728 1005v15M1733 1005v15M1738 1005v15M1743 1005v15M1748 1005v15M1753 1005v15"/>
<path d="M1722 1020L1756 1010V1020Z" fill="#123e66"/>
<text x="1762" y="1023" font-size="17" fill="#222" textLength="72" lengthAdjust="spacingAndGlyphs">227/1 kb</text>
<!-- left strip -->
<rect x="0" y="0" width="11" height="50" fill="#a8dcec"/>
<rect x="0" y="50" width="11" height="100" fill="#f4f4f4"/>
<rect x="0" y="150" width="11" height="78" fill="#27313a"/>
<rect x="0" y="228" width="11" height="792" fill="#f0f0f0"/>
<!-- title + menu -->
<rect x="10" y="0" width="1910" height="45" fill="#fff"/>
<rect x="0" y="0" width="1920" height="1" fill="#4a5a60"/>
<rect x="22" y="10" width="25" height="23" fill="#0a0a0a"/>
<text x="30" y="21" font-size="10" class="b" fill="#2fd06a">IC</text><path d="M25 21v-3M27 21v-5M29 21v-7" stroke="#ccc" stroke-width="1.200"/><text x="25" y="29" font-size="5.500" class="b" fill="#bbb">Markets</text>
<text x="52" y="29" font-size="18" fill="#111" textLength="753" lengthAdjust="spacingAndGlyphs">66332845: ICMarketsSC-Demo06 - Demo Account - Raw Trading Ltd - [!STD_DJI30,M1 (offline)]</text>
<path d="M1749 22.500h15" stroke="#111" stroke-width="1.200"/>
<rect x="1819.500" y="15.500" width="14" height="14.500" fill="none" stroke="#111" stroke-width="1.200"/>
<path d="M1890 15L1905 30M1905 15L1890 30" stroke="#111" stroke-width="1"/>
<rect x="10" y="45" width="1910" height="109" fill="#f0f0f0"/>
<rect x="16" y="47" width="14" height="14" fill="#dfe9f5" stroke="#7d9bbd"/><rect x="22" y="56" width="18" height="15" fill="#eaf2fb" stroke="#3c7ec2"/><rect x="22" y="56" width="18" height="4" fill="#4f8fd0"/>
<path d="M25 68l3-4 3 3 3-4" fill="none" stroke="#47a"/>
<g class="mn"><text x="52" y="66">File</text><text x="104" y="66">View</text><text x="167" y="66">Insert</text><text x="237" y="66">Charts</text><text x="313" y="66">Tools</text><text x="380" y="66">Window</text><text x="472" y="66">Help</text></g>
<g fill="#f8f8f8"><rect x="1845" y="47" width="27" height="26"/><rect x="1874" y="47" width="27" height="26"/><rect x="1903" y="47" width="17" height="26"/></g>
<rect x="1855" y="62" width="5" height="3" fill="#888"/><rect x="1884" y="57" width="6" height="7" fill="none" stroke="#888"/><text x="1910" y="65" font-size="11" fill="#777">x</text>
<!-- toolbar lines -->
<rect x="10" y="75" width="1910" height="1" fill="#bdbdbd"/>
<rect x="10" y="115" width="1362" height="1.500" fill="#c4c4c4"/>
<rect x="1372" y="76" width="1" height="40" fill="#cfcfcf"/>
<path d="M142 80v34M354 80v34M839 80v34M971.500 80v34M1101 80v34M1188 80v34M102 118v35M454 118v35M832 118v35" stroke="#b0b0b0"/>
<path d="M14 80v32M14 120v32M843 80v32M458 120v32" stroke="#aaa" stroke-width="4" stroke-dasharray="1 1.500"/>
<!-- toolbar row1 icons -->
<rect x="24" y="84.500" width="18" height="15" rx="1" fill="#d8e9f7" stroke="#3b7fb8" stroke-width="1.500"/><path d="M28 88v8M26 94h12" stroke="#556" stroke-width="1.200"/>
<path d="M37 89h5v6h6v6h-6v7h-5v-7h-6v-6h6Z" fill="#2fcc2f" stroke="#119011"/>
<path d="M60 95h9l-4.500 4.500ZM121 95h9l-4.500 4.500Z" fill="#000"/>
<rect x="84" y="84.500" width="19" height="15" rx="1" fill="#d8e9f7" stroke="#3b7fb8" stroke-width="1.500"/><rect x="88" y="91.500" width="21" height="16" rx="1" fill="#e6f0f9" stroke="#3b7fb8" stroke-width="1.500"/><path d="M88 89v6M88 93h11M93 103h12" stroke="#778" stroke-width="1.200"/>
<rect x="153" y="83.500" width="24" height="24" rx="2" fill="#f2f7fc" stroke="#6aa0d4" stroke-width="1.500"/><rect x="153" y="83.500" width="24" height="4" fill="#9cc3ea"/><path d="M160 88l5 5h-3v5h-4v-5h-3Z" fill="#23a638"/><path d="M166 104l5-5h-3v-5h-4v5h-3Z" fill="#e0562e" transform="translate(2,0)"/>
<circle cx="207" cy="96" r="8" fill="none" stroke="#666" stroke-width="2.500"/><path d="M207 84v8M207 100v8M195 96h8M211 96h8" stroke="#666" stroke-width="2.500"/>
<path d="M233 86h11l3 3h9v10h-23Z" fill="#f5dc94" stroke="#c9a040"/><path d="M240 99v9" stroke="#777" stroke-dasharray="1.500 1.500"/><path d="M250 92l3 6 7 1-5 5 1 7-6-3-6 3 1-7-5-5 7-1Z" fill="#f8cf45" stroke="#b08420"/>
<rect x="276" y="85.500" width="23" height="21" rx="2" fill="#fff" stroke="#2c73b5" stroke-width="2"/><rect x="276" y="85.500" width="5" height="21" fill="#4a8fcc"/><path d="M284 90h13M284 95h13M284 100h13" stroke="#667" stroke-width="1.300"/><path d="M279 90h1.500M279 95h1.500" stroke="#d33" stroke-width="1.500"/>
<rect x="317" y="85" width="20" height="21" fill="#e8edf2" stroke="#b0b8c0"/><path d="M323 86v8M332 86v6" stroke="#667"/><circle cx="328" cy="96" r="7" fill="#c8dcec" stroke="#7ea0bc" stroke-width="1.800"/><path d="M333 101l9 8" stroke="#c8a030" stroke-width="3"/>
<rect x="367" y="83" width="17" height="22" rx="1" fill="#fff" stroke="#777" stroke-width="1.300"/><path d="M370 89h8M370 93h10M370 97h7" stroke="#555"/><path d="M379 95h5v6h6v6h-6v6h-5v-6h-6v-6h6Z" fill="#2fcc2f" stroke="#119011"/>
<text x="398" y="102" font-size="18" fill="#111" textLength="86" lengthAdjust="spacingAndGlyphs">New Order</text>
<path d="M507 85L521 99L512 108L496 99Z" fill="#e4bb5a" stroke="#8a6318"/><path d="M507 85L496 99L512 100L521 99Z" fill="#d8a83e"/>
<path d="M540 84h15v6l-3 1v10h-12Z" fill="#3f90de"/><path d="M543 88h8M543 93h8" stroke="#cfe4f8" stroke-width="2"/><path d="M538 107a5 5 0 0 1 0-9 6 6 0 0 1 11-2 6 6 0 0 1 9 3 4 4 0 0 1 2 8Z" fill="#d6deea" stroke="#7d8fa9" stroke-width="1.300"/>
<circle cx="590" cy="95" r="12" fill="#e6e8ea" stroke="#a9b3bb" stroke-width="1.500"/><circle cx="590" cy="95" r="8" fill="none" stroke="#a2bcd0" stroke-width="2"/><circle cx="590" cy="95" r="3.500" fill="#6aa0c4"/><path d="M591 96v11a10 10 0 0 0 10-7" fill="none" stroke="#3a9a4a" stroke-width="2.500"/>
<path d="M630 87h13a2 2 0 0 1 2 2v17h-15Z" fill="#5ea0dc" stroke="#2f6ba4"/><rect x="619" y="89" width="18" height="19" rx="1.500" fill="#eec044" stroke="#9a7212"/><path d="M621 86h12v3h-12Z" fill="#f0d070" stroke="#9a7212"/><text x="623" y="105" font-size="15" class="b" fill="#6a4a00">$</text>
<circle cx="669" cy="88" r="6" fill="#f4b43a" stroke="#b0781a"/><path d="M660 103a8 8 0 0 1 14-6l-1 10h-9a5 5 0 0 1-4-4Z" fill="#57ad3c"/><circle cx="678" cy="101" r="5.500" fill="#e8d532" stroke="#b09e10" stroke-width="3" stroke-dasharray="2 1.500"/>
<ellipse cx="712" cy="90" rx="12" ry="6" fill="#4f9ade" stroke="#2f6ba4"/><path d="M700 92h24l-4 11h-16Z" fill="#eed089"/><path d="M700 92q12 7 24 0" fill="#3f86c8"/><circle cx="717" cy="102" r="6" fill="#fff" stroke="#d6301f" stroke-width="3"/>
<text x="733" y="102" font-size="18" fill="#111" textLength="98" lengthAdjust="spacingAndGlyphs">AutoTrading</text>
<!-- chart mode icons -->
<rect x="929.500" y="79" width="38" height="34" fill="#f8f8f8" stroke="#c8c8c8"/><rect x="1105.500" y="79" width="38" height="34" fill="#f8f8f8" stroke="#c8c8c8"/><rect x="1146.500" y="79" width="38" height="34" fill="#f8f8f8" stroke="#c8c8c8"/>
<g fill="none" stroke="#5f5f5f" stroke-width="2"><path d="M859 86v22M855 104h21M900 86v22M896 104h21M942 86v22M938 104h21M1117 86v22M1113 104h21M1158 86v22M1154 104h21"/></g>
<path d="M866 100h5v-10h3" fill="none" stroke="#27a83a" stroke-width="2.500"/><path d="M911 83v18" stroke="#237a30"/><rect x="908" y="87" width="6" height="11" fill="#3cd24c" stroke="#1a7a28"/><path d="M944 101q7-18 11-11l5 7" fill="none" stroke="#3a8a3a" stroke-width="1.800"/>
<circle cx="991" cy="93" r="9" fill="#d7e8f8" stroke="#3a8ed0" stroke-width="2.500"/><path d="M986 93h10M991 88v10" stroke="#3a8ed0" stroke-width="2.200"/><path d="M997 100l8 7" stroke="#dcb43c" stroke-width="3.500"/>
<circle cx="1033" cy="93" r="9" fill="#d7e8f8" stroke="#3a8ed0" stroke-width="2.500"/><path d="M1028 93h10" stroke="#3a8ed0" stroke-width="2.200"/><path d="M1039 100l8 7" stroke="#dcb43c" stroke-width="3.500"/>
<rect x="1063" y="83" width="12" height="12" fill="#3c9a55"/><rect x="1076" y="83" width="12" height="12" fill="#2f7fc4"/><rect x="1063" y="96" width="12" height="12" fill="#2f7fc4"/><rect x="1076" y="96" width="12" height="12" fill="#3c9a55"/>
<path d="M1065 89h8v3h-8ZM1078 89h8v3h-8ZM1065 102h8v3h-8ZM1078 102h8v3h-8Z" fill="#dbe8ee"/>
<path d="M1124 89l7 6-7 6Z" fill="#5fd84f" stroke="#278a30"/>
<path d="M1167 86v18" stroke="#3a7ec0" stroke-width="1.800"/><path d="M1176 95h-3v-3l-3 3 3 3v-3Z" fill="#d83a2a" stroke="#d83a2a"/>
<path d="M1201 84h10l5 5v16h-15Z" fill="#fff" stroke="#777" stroke-width="1.300"/><path d="M1208 96h6v6h7v6h-7v7h-6v-7h-7v-6h7Z" fill="#2fcc2f" stroke="#119011" transform="translate(2,-2)"/>
<path d="M1234 95h9l-4.500 4.500ZM1294 95h9l-4.500 4.500ZM1354 95h9l-4.500 4.500Z" fill="#000"/>
<circle cx="1270" cy="95" r="12.500" fill="#1f6fb8"/><circle cx="1270" cy="95" r="8.500" fill="#eef2f6"/><path d="M1270 89v6l4 3" stroke="#445" stroke-width="1.500" fill="none"/>
<rect x="1319" y="85" width="25" height="22" fill="#e5eff8" stroke="#5a8bbb"/><rect x="1319" y="85" width="25" height="4" fill="#3f86c8"/><path d="M1322 97l6-3 5 1 7-3" stroke="#b04a30" fill="none" stroke-width="1.500"/><path d="M1322 105l6-4 5 2 7-3" stroke="#3a9a40" fill="none" stroke-width="1.500"/>
<circle cx="1859" cy="93" r="7" fill="#dbe8f7" stroke="#2d6eb5" stroke-width="2.500"/><path d="M1855 99l-5 8" stroke="#2d6eb5" stroke-width="3"/>
<ellipse cx="1897" cy="103" rx="8" ry="8" fill="#eee" stroke="#bbb"/><circle cx="1908" cy="92" r="12" fill="#d7301f"/><text x="1904" y="98" font-size="16" class="b" fill="#fff">1</text>
<!-- row2 -->
<rect x="19.500" y="118.500" width="38" height="35" fill="#f9f9f9" stroke="#cfcfcf"/>
<path d="M30 125l13 12-6 1 3 8-3 1-3-8-4 4Z" fill="#444" stroke="#333"/>
<path d="M78 125v8M78 140v8M67 136h8M81 136h9" stroke="#666" stroke-width="1.500"/>
<path d="M125 127v19" stroke="#777" stroke-width="1.800"/><path d="M158 136h18" stroke="#666" stroke-width="2"/><path d="M217 127L198 147" stroke="#666" stroke-width="1.800"/>
<path d="M236 143L248 128M243 146L256 130M248 124L241 149M256 124L250 146M238 135h16M240 141h14" stroke="#555" stroke-width="1.300" fill="none"/>
<text x="252" y="150" font-size="9" class="b" fill="#333">E</text>
<path d="M280 125h20M280 130h20M280 135h20M280 140h20M280 145h11" stroke="#777" stroke-dasharray="2 1"/><text x="293" y="151" font-size="9" class="b" fill="#333">F</text>
<text x="324" y="143" font-size="17" class="b" fill="#444">A</text>
<rect x="363" y="125" width="17" height="22" fill="none" stroke="#888" stroke-dasharray="1.500 1.500"/><text x="366" y="143" font-size="17" class="b" fill="#444">T</text>
<path d="M408 127l4 5-4 5-4-5ZM420 137l4 5-4 5-4-5Z" fill="#333"/><path d="M434 134h10l-5 6Z" fill="#000"/>
<rect x="463.500" y="118.500" width="37" height="34" fill="#f9f9f9" stroke="#d4d4d4"/>
<g class="tf"><text x="472" y="142">M1</text><text x="512" y="142">M5</text><text x="550" y="142">M15</text><text x="591" y="142">M30</text><text x="636" y="142">H1</text><text x="676" y="142">H4</text><text x="717" y="142">D1</text><text x="759" y="142">W1</text><text x="797" y="142">MN</text></g>
<!-- taskbar -->
<rect x="0" y="1020" width="1920" height="60" fill="#29383e"/>
<rect x="0" y="1020" width="73" height="60" fill="#243137"/>
<path d="M24 1043l10-1.500V1050H24ZM36 1041l12-2V1050H36ZM24 1052h10v8.500l-10-1.500ZM36 1052h12v11l-12-2Z" fill="#fff"/>
<rect x="73" y="1021" width="514" height="57" fill="#f2f2f2" stroke="#b4b4b4" stroke-width="2"/>
<circle cx="106" cy="1046" r="8" fill="none" stroke="#222" stroke-width="2"/><path d="M100 1052l-8 11" stroke="#222" stroke-width="2"/>
<text x="132" y="1060" font-size="22" fill="#333" textLength="198" lengthAdjust="spacingAndGlyphs">Type here to search</text>
<g><path d="M515 1050L532 1075L538 1068L525 1048Z" fill="#6a9a3a"/><path d="M530 1060L545 1060M550 1075Q544 1050 560 1042" stroke="#5a8a30" stroke-width="3" fill="none"/><circle cx="495" cy="1043" r="9" fill="#f4a98a"/><circle cx="510" cy="1036" r="9" fill="#f8b898"/><circle cx="503" cy="1052" r="10" fill="#f2a080"/><circle cx="520" cy="1048" r="9" fill="#f6b090"/><circle cx="488" cy="1055" r="7" fill="#f8c0a0"/><circle cx="561" cy="1038" r="7" fill="#f29a88"/></g>
<path d="M612 1039h14M612 1060h14M612 1044h13v11h-13M630 1039v4M632 1046v9M630 1057v4M636 1039v4" fill="none" stroke="#ddd" stroke-width="1.500"/>
<path d="M686 1037h15l3 4h13v22h-31Z" fill="#f8c63e"/><rect x="686" y="1044" width="31" height="18" fill="#f7d468"/><path d="M694 1062v-8h14v8" fill="#1f7fd0"/>
<circle cx="777" cy="1051" r="18" fill="#db4437"/><path d="M777 1051L761 1060A18 18 0 0 0 786 1067Z" fill="#0f9d58"/><path d="M777 1051L795 1051A18 18 0 0 1 786 1067Z" fill="#f4b400"/><circle cx="777" cy="1051" r="7" fill="#4285f4" stroke="#fff" stroke-width="2"/><circle cx="785" cy="1060" r="9" fill="#d3d3de" stroke="#889"/><path d="M781 1055l7 9-4 1Z" fill="#e03030"/>
<ellipse cx="852" cy="1052" rx="18" ry="19" fill="#2f9fd8"/><path d="M842 1052l20-9-4 20-6-6-3 5v-7Z" fill="#fff"/><rect x="852" y="1056" width="23" height="15" rx="7" fill="#70767c"/><text x="854" y="1069" font-size="13" fill="#eee">.43</text>
<rect x="891" y="1020" width="72" height="60" fill="#46545a"/>
<rect x="908" y="1032" width="36" height="36" fill="#000"/><text x="922" y="1053" font-size="20" class="b" fill="#2fd06a">IC</text><path d="M914 1052v-4M917 1052v-7M920 1052v-10" stroke="#ddd" stroke-width="2"/><text x="911" y="1063" font-size="7" class="b" fill="#ddd">Markets</text>
<rect x="982" y="1032" width="37" height="36" fill="#fff"/><path d="M982 1062q18-9 37-2v8h-37Z" fill="#1a9ad0"/><text x="992" y="1045" font-size="7" class="b" fill="#333">Forex</text><text x="986" y="1053" font-size="7" class="b" fill="#333">Simulator</text>
<g fill="#b89a6a"><rect x="671" y="1077" width="61" height="3"/><rect x="746" y="1077" width="61" height="3"/><rect x="821" y="1077" width="61" height="3"/><rect x="891" y="1077" width="72" height="3"/><rect x="970" y="1077" width="62" height="3"/></g>
<path d="M1437 1035A17 17 0 1 1 1418 1060A18 18 0 0 0 1437 1035Z" fill="#f5b014"/>
<text x="1464" y="1060" font-size="20" fill="#eee" textLength="41" lengthAdjust="spacingAndGlyphs">10°C</text>
<text x="1519" y="1060" font-size="20" fill="#eee" textLength="46" lengthAdjust="spacingAndGlyphs">Clear</text>
<path d="M1591 1053l9-9 9 9" fill="none" stroke="#eee" stroke-width="1.500"/>
<rect x="1626" y="1045" width="21" height="12" fill="none" stroke="#eee" stroke-width="1.500"/><rect x="1627" y="1046" width="10" height="10" fill="#eee"/>
<path d="M1664 1060a20 20 0 0 1 18-17M1669 1060a14 14 0 0 1 13-12M1674 1060a8 8 0 0 1 8-7" fill="none" stroke="#ccc" stroke-width="1.500"/>
<path d="M1698 1048h4l7-5v18l-7-5h-4ZM1712 1048l6 7M1718 1048l-6 7" fill="none" stroke="#ddd" stroke-width="1.200"/>
<text x="1761" y="1043" font-size="18" fill="#eee" textLength="43" lengthAdjust="spacingAndGlyphs">23:41</text>
<text x="1736" y="1072" font-size="18" fill="#eee" textLength="94" lengthAdjust="spacingAndGlyphs">19/09/2022</text>
<path d="M1858 1038h24v19h-18l-6 8Z" fill="#fff"/><path d="M1862 1044h15M1862 1049h15M1862 1054h15" stroke="#333" stroke-width="1.200"/>
<circle cx="1881" cy="1062" r="12" fill="#3a474d" stroke="#999" stroke-width="1.500"/><text x="1876" y="1068" font-size="16" fill="#eee">1</text>
<rect x="1912" y="1020" width="1" height="60" fill="#59686e"/>
</svg>
<script>
document.querySelectorAll('polyline.s').forEach(function(p){
  var a=p.getAttribute('points').trim().split(/\s+/).map(function(s){return s.split(',').map(Number)});
  if(a.length<3)return;
  var d='M'+a[0][0]+' '+a[0][1];
  for(var i=1;i<a.length-1;i++){
    d+='Q'+a[i][0]+' '+a[i][1]+' '+(a[i][0]+a[i+1][0])/2+' '+(a[i][1]+a[i+1][1])/2;
  }
  d+='L'+a[a.length-1][0]+' '+a[a.length-1][1];
  var q=document.createElementNS('http://www.w3.org/2000/svg','path');
  q.setAttribute('d',d);
  q.setAttribute('class','ma');
  q.setAttribute('stroke',p.getAttribute('stroke'));
  if(p.getAttribute('stroke-width'))q.setAttribute('stroke-width',p.getAttribute('stroke-width'));
  p.parentNode.replaceChild(q,p);
});
</script>
</body></html>
